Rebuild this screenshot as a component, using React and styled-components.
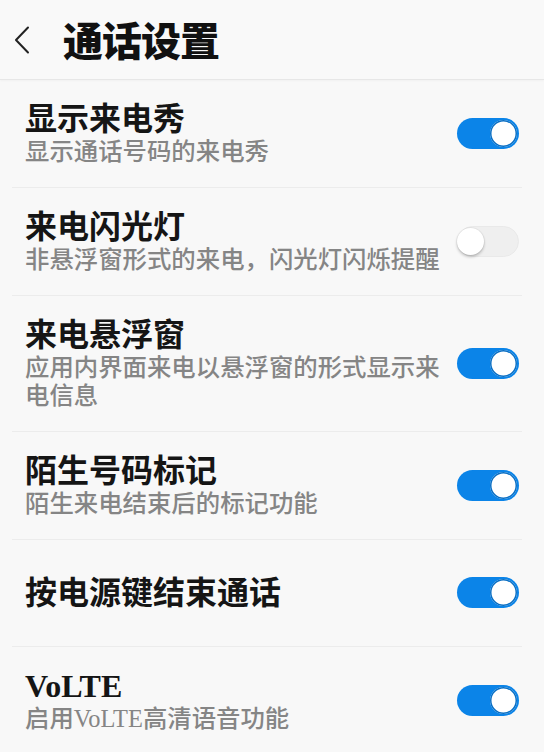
import React from "react";
import styled, { createGlobalStyle } from "styled-components";

const Global = createGlobalStyle`
  html, body { margin: 0; padding: 0; background: #f8f8f8; }
  body { font-family: "Liberation Serif", "Noto Sans CJK SC", serif; }
  * { box-sizing: border-box; }
`;

const Page = styled.div`
  width: 544px;
  min-height: 752px;
  background: #f8f8f8;
  overflow: hidden;
`;

const Header = styled.header`
  height: 80px;
  display: flex;
  align-items: center;
  padding-left: 14px;
  background: #f9f9f9;
  border-bottom: 1px solid #e7e7e7;
  box-shadow: 0 1px 2px rgba(0, 0, 0, 0.03);
`;

const BackButton = styled.button`
  border: 0;
  background: none;
  padding: 0;
  width: 16px;
  height: 28px;
  display: flex;
  align-items: center;
  justify-content: center;
  margin-top: 1px;
`;

const HeaderTitle = styled.h1`
  margin: 0 0 2px 33px;
  font-family: "Noto Sans CJK SC", sans-serif;
  font-size: 40px;
  font-weight: 900;
  color: #111;
  line-height: 48px;
  letter-spacing: -1px;
`;

const List = styled.ul`
  list-style: none;
  margin: 0 22px 0 12px;
  padding: 0;
`;

const Row = styled.li`
  display: flex;
  align-items: center;
  gap: 14px;
  min-height: 107px;
  padding: 20px 3px 21px 13px;
  border-bottom: 1px solid #ececec;
`;

const Texts = styled.div`
  flex: 1;
  min-width: 0;
`;

const Title = styled.div`
  font-size: 32px;
  font-weight: 700;
  line-height: 38px;
  color: #151515;
`;

const Subtitle = styled.div`
  font-size: 24.4px;
  font-weight: 500;
  line-height: 28px;
  color: #858585;
`;

const Track = styled.div`
  position: relative;
  flex: none;
  width: 62px;
  height: 31px;
  border-radius: 16px;
  background: ${(p) => (p.$on ? "#0b84e8" : "#efefef")};
  border: ${(p) => (p.$on ? "none" : "1px solid #e9e9e9")};
`;

const Knob = styled.div`
  position: absolute;
  top: ${(p) => (p.$on ? "2px" : "1px")};
  ${(p) => (p.$on ? "right: 2px;" : "left: -1px;")}
  width: 27px;
  height: 27px;
  border-radius: 50%;
  background: #fff;
  box-shadow: ${(p) =>
    p.$on
      ? "inset 0 0 0 1.5px #0a6fc4"
      : "0 2px 3px rgba(0,0,0,0.22), 0 0 0 1px rgba(0,0,0,0.04)"};
`;

const Toggle = ({ on }) => (
  <Track $on={on}>
    <Knob $on={on} />
  </Track>
);

const items = [
  { title: "显示来电秀", sub: "显示通话号码的来电秀", on: true },
  { title: "来电闪光灯", sub: "非悬浮窗形式的来电，闪光灯闪烁提醒", on: false },
  { title: "来电悬浮窗", sub: "应用内界面来电以悬浮窗的形式显示来电信息", on: true },
  { title: "陌生号码标记", sub: "陌生来电结束后的标记功能", on: true },
  { title: "按电源键结束通话", on: true },
  { title: "VoLTE", sub: "启用VoLTE高清语音功能", on: true },
];

export default function App() {
  return (
    <Page>
      <Global />
      <Header>
        <BackButton aria-label="返回">
          <svg width="16" height="28" viewBox="0 0 16 28">
            <path d="M14 1.5 L2 14 L14 26.5" fill="none" stroke="#222" strokeWidth="2" strokeLinecap="round" strokeLinejoin="round" />
          </svg>
        </BackButton>
        <HeaderTitle>通话设置</HeaderTitle>
      </Header>
      <List>
        {items.map((it) => (
          <Row key={it.title}>
            <Texts>
              <Title>{it.title}</Title>
              {it.sub && <Subtitle>{it.sub}</Subtitle>}
            </Texts>
            <Toggle on={it.on} />
          </Row>
        ))}
      </List>
    </Page>
  );
}
